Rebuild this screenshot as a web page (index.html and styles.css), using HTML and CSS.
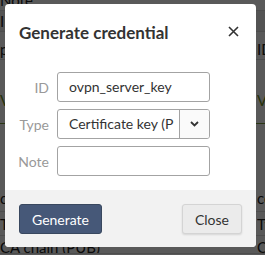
FILE: index.html
```html
<!DOCTYPE html>
<html lang="en">
<head>
    <meta charset="UTF-8">
    <title>Generate credential</title>
    <link rel="stylesheet" href="styles.css">
</head>
<body>
    <!-- page behind the dialog -->
    <div class="page">
        <div class="page-row r1"><span>Note:</span><span></span></div>
        <div class="page-row r2"><span>ID</span><span></span></div>
        <div class="page-row r3"><span>pe</span><span>ID</span></div>
        <div class="page-row r4 green"><span>VV</span><span>VV</span></div>
        <div class="page-row r5"><span>cert</span><span>cert</span></div>
        <div class="page-row r6"><span>Type</span><span>Type</span></div>
        <div class="page-row r7"><span>CA chain (PUB)</span><span>CA</span></div>
    </div>
    <div class="backdrop"></div>

    <div class="modal">
        <div class="modal-head">
            <h3>Generate credential</h3>
            <button class="x-btn" aria-label="Close">
                <svg width="11" height="11" viewBox="0 0 11 11"><path d="M1 1L10 10M10 1L1 10" stroke="#333" stroke-width="1.6" fill="none"/></svg>
            </button>
        </div>
        <div class="modal-body">
            <label>ID</label>
            <div class="field">ovpn_server_key</div>
            <label>Type</label>
            <div class="field select">
                <span class="sel-text">Certificate key (PEM)</span>
                <span class="sel-btn">
                    <svg width="9" height="6" viewBox="0 0 9 6"><path d="M1 1L4.5 4.5L8 1" stroke="#333" stroke-width="1.8" fill="none"/></svg>
                </span>
            </div>
            <label>Note</label>
            <div class="field"></div>
        </div>
        <div class="modal-foot">
            <button class="btn primary">Generate</button>
            <button class="btn">Close</button>
        </div>
    </div>
</body>
</html>
```

FILE: styles.css
```css
*,*::before,*::after{box-sizing:border-box;margin:0;padding:0;}
body{
    width:265px;height:255px;overflow:hidden;position:relative;
    font-family:Lato,'Noto Sans',sans-serif;
    background:#fff;
}
/* ------ background page ------ */
.page{height:255px;overflow:hidden;padding-top:0;font-size:15px;color:#222;}
.page-row{display:flex;justify-content:space-between;border-bottom:1px solid #ddd;}
.page-row span:last-child{width:8px;overflow:hidden;white-space:nowrap;}
.r1{height:11px;line-height:0;overflow:hidden;}
.r2{height:21px;line-height:21px;background:#eee;}
.r3{height:28px;line-height:34px;}
.r4{height:64px;line-height:80px;border-bottom:1px solid #7a9a3a;}
.green{color:#6c8f1f;}
.r5{height:88px;line-height:148px;}
.r6{height:24px;line-height:24px;}
.r7{height:18px;line-height:22px;overflow:hidden;}
.backdrop{position:absolute;inset:0;background:rgba(0,0,0,0.65);}

/* ------ dialog ------ */
.modal{
    position:absolute;left:5px;top:4px;width:251px;height:243px;
    background:#fff;border-radius:4px;overflow:hidden;
    display:flex;flex-direction:column;
}
.modal-head{display:flex;justify-content:space-between;align-items:flex-start;padding:19px 14px 0 14px;height:48px;}
.modal-head h3{font-size:17px;font-weight:700;color:#333;line-height:20px;}
.x-btn{border:none;background:none;width:12px;height:12px;display:flex;margin:3px 2px 0 0;}
.modal-body{
    display:grid;grid-template-columns:30px 153px;column-gap:8px;row-gap:7px;
    padding:20px 14px 14px 14px;align-items:center;
}
.modal-body label{font-size:14px;color:#999;text-align:right;justify-self:end;}
.field{
    height:30px;border:1px solid #a3a3a3;border-radius:3px;
    padding:0 11px;font-size:14px;line-height:28px;color:#333;
    white-space:nowrap;overflow:hidden;
}
.select{display:flex;padding:0 0 0 11px;}
.sel-text{flex:1;overflow:hidden;margin-right:5px;}
.sel-btn{width:30px;border-left:1px solid #a3a3a3;background:#fafafa;display:flex;align-items:center;justify-content:center;}
.modal-foot{
    flex:1;background:#f2f2f2;display:flex;justify-content:space-between;
    padding:14px 14px 0 14px;
}
.btn{
    height:30px;padding:0 12px;border-radius:3px;font-family:inherit;font-size:14px;
    border:1px solid #d4d4d4;background:#ebebeb;color:#333;
    box-shadow:0 1px 2px rgba(0,0,0,0.12);
}
.btn.primary{width:83px;background:#465878;border-color:#39485f;color:#fff;box-shadow:none;}
```
